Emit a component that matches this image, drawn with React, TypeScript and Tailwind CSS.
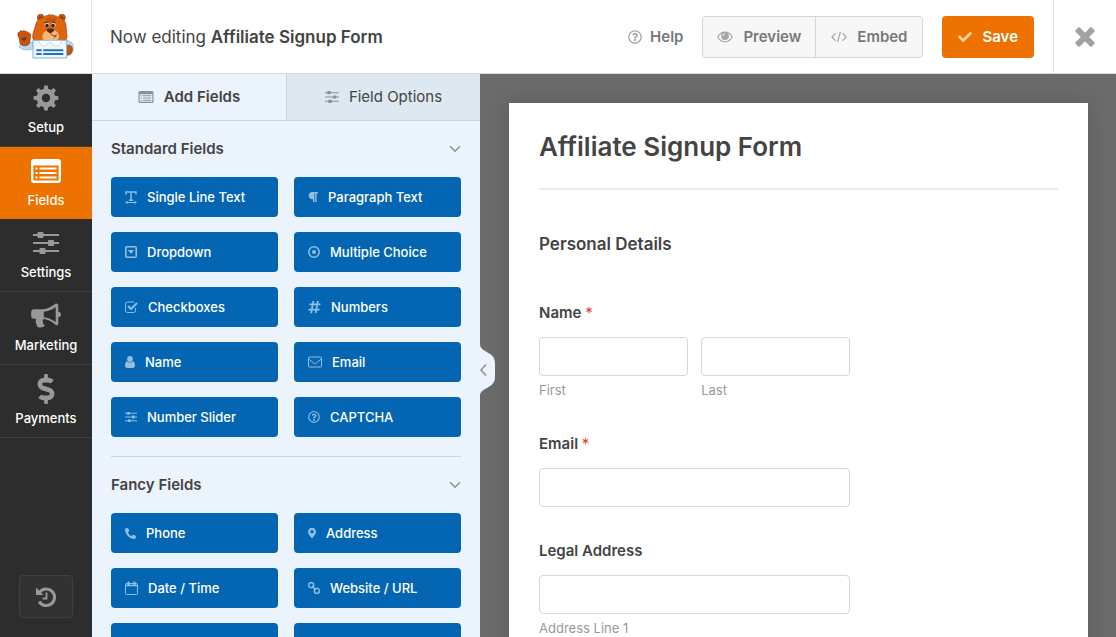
import type { ReactNode } from "react";
import {
  FaCheck,
  FaDollarSign,
  FaHashtag,
  FaLock,
  FaMapMarkerAlt,
  FaParagraph,
  FaPhoneAlt,
  FaRegQuestionCircle,
  FaUpload,
} from "react-icons/fa";

type IconProps = { className?: string };

function BearLogo() {
  return (
    <svg viewBox="50 40 174 141" className="h-[47px] w-[58px]" role="img" aria-label="WPForms">
      <path d="M70 132c-14 0-16 8-10 13 8 7 22 7 38 3v-22c-8 2-14 7-28 6z" fill="#b9dcf0" stroke="#7aa8c8" strokeWidth="2" />
      <path d="M196 122c18 2 26 12 22 28-3 12-10 16-20 16z" fill="#b9dcf0" stroke="#7aa8c8" strokeWidth="2" />
      <path d="M200 138c10-4 16 2 16 12s-6 18-16 16z" fill="#c9540c" stroke="#7a3a12" strokeWidth="2" />
      <path
        d="M55 112c-4-7-3-15 3-14 0-6 6-6 8-3 3-3 8-2 9 1 4-2 8 0 8 4 6-1 9 3 8 8-2 7-1 15-4 24-6 8-20 8-27 1-3-8-1-14-5-21z"
        fill="#c9540c"
        stroke="#7a3a12"
        strokeWidth="2"
      />
      <path d="M63 113l6 2 7-3 3 5-7 8-7-5z" fill="#7a3418" />
      <circle cx="121" cy="54" r="10" fill="#d25a0c" stroke="#7a3a12" strokeWidth="2" />
      <circle cx="185" cy="54" r="10" fill="#d25a0c" stroke="#7a3a12" strokeWidth="2" />
      <circle cx="121" cy="55" r="5" fill="#8a3c12" />
      <circle cx="185" cy="55" r="5" fill="#8a3c12" />
      <path
        d="M106 76c2-14 14-22 27-24 1-4 5-5 8-3 2-5 8-5 11-2 3-3 8-2 10 2 4-2 8 0 8 3 14 2 25 10 27 24 0 12 3 22 3 36 0 8-6 14-14 14h-74c-9 0-15-6-15-14 0-14 6-22 9-36z"
        fill="#e0640c"
        stroke="#8a4414"
        strokeWidth="2"
      />
      <path d="M135 53l8 6 5-9 6 8 8-7 2 8 8-4-10 12h-20z" fill="#c4510b" />
      <path d="M126 110c2-14 14-20 25-20 11 0 24 6 25 18 1 12-8 17-25 17s-26-4-25-15z" fill="#f6b878" />
      <circle cx="140" cy="77" r="7" fill="#f4e6da" />
      <circle cx="159" cy="77" r="7" fill="#f4e6da" />
      <circle cx="140" cy="78" r="5.500" fill="#252b36" />
      <circle cx="158" cy="78" r="5.500" fill="#252b36" />
      <path d="M132 69l11-2M155 67l11 2" stroke="#6a2c0c" strokeWidth="3" />
      <path d="M139 90c0-5 22-5 22 0s-6 10-11 10-11-5-11-10z" fill="#5d2414" />
      <path d="M150 100c2 8 14 12 20 4M160 113l8-3" fill="none" stroke="#8a3c1a" strokeWidth="3" />
      <path d="M98 122h101v53H98z" fill="#eef6fc" stroke="#86b2d3" strokeWidth="3" />
      <path d="M116 123c2 12 10 18 19 15l14-11 14 11c10 3 18-3 20-15z" fill="#fff" stroke="#a5c9e2" strokeWidth="2" />
      <path d="M108 152h16M108 163h16M129 152h60M129 163h60" stroke="#2272b8" strokeWidth="6" />
    </svg>
  );
}

function GearIcon({ className }: IconProps) {
  return (
    <svg viewBox="0 0 26 26" fill="currentColor" className={className} aria-hidden="true">
      <path
        fillRule="evenodd"
        d="M13 3.600a9.400 9.400 0 1 0 0 18.800 9.400 9.400 0 0 0 0-18.800zm0 5.200a4.200 4.200 0 1 1 0 8.400 4.200 4.200 0 0 1 0-8.400z"
      />
      {[0, 45, 90, 135, 180, 225, 270, 315].map((angle) => (
        <path key={angle} d="M10.600 5l.7-4.400h3.400l.7 4.400z" transform={`rotate(${angle} 13 13)`} />
      ))}
    </svg>
  );
}

function ListIcon({ className }: IconProps) {
  return (
    <svg viewBox="0 0 30 24" fill="currentColor" className={className} aria-hidden="true">
      <path
        fillRule="evenodd"
        d="M3 0h24a3 3 0 0 1 3 3v18a3 3 0 0 1-3 3H3a3 3 0 0 1-3-3V3a3 3 0 0 1 3-3zM2.400 6.500v14.100c0 .6.4 1 1 1h23.200c.6 0 1-.4 1-1V6.500z"
      />
      <path d="M4.500 8.500h2v2h-2zM8.500 8.500h17v2h-17zM4.500 13h2v2h-2zM8.500 13h17v2h-17zM4.500 17.500h2v2h-2zM8.500 17.500h17v2h-17z" />
    </svg>
  );
}

function SlidersIcon({ className }: IconProps) {
  return (
    <svg viewBox="0 0 26 24" fill="currentColor" className={className} aria-hidden="true">
      <path d="M0 3h26v2H0zM0 11h26v2H0zM0 19h26v2H0z" />
      <rect x="4.500" y="1" width="6" height="6" rx="1" />
      <rect x="15" y="9" width="6" height="6" rx="1" />
      <rect x="6.500" y="17" width="6" height="6" rx="1" />
    </svg>
  );
}

function BullhornIcon({ className }: IconProps) {
  return (
    <svg viewBox="0 0 30 26" fill="currentColor" className={className} aria-hidden="true">
      <path
        fillRule="evenodd"
        d="M25.500.5c1 0 1.800.8 1.800 1.800v6.500a2.600 2.600 0 0 1 0 5.200v6.500c0 1.600-1.600 2.200-2.800 1.200-4-3.400-7.500-5.200-11.500-5.800-1.600.6-1.800 2-.8 3-.9 1.300.3 2.300 1.600 3.400-.8 2.400-5.800 3-7.700 1.200-.7-2.600-2-4.800-1-7.700H3a2.800 2.800 0 0 1-2.800-2.800v-4A2.800 2.800 0 0 1 3 6.300h7.600C15.800 6.300 20 3.800 24.400.7c.3-.1.700-.2 1.100-.2zm-.8 3.400C20.800 6.700 16.900 8.300 12.800 8.700v5.500c4.100.4 8 2 11.900 4.900z"
      />
    </svg>
  );
}

function HistoryIcon({ className }: IconProps) {
  return (
    <svg viewBox="0 0 22 22" fill="none" stroke="currentColor" className={className} aria-hidden="true">
      <path d="M4.700 6.200a8.300 8.300 0 1 1-.5 9.400" strokeWidth="3" />
      <path d="M1 1.500V9h7.500z" fill="currentColor" stroke="none" />
      <path d="M11.500 6.500v6H7.500" strokeWidth="1.800" />
    </svg>
  );
}

function EyeIcon({ className }: IconProps) {
  return (
    <svg viewBox="0 0 16 12" fill="none" stroke="currentColor" className={className} aria-hidden="true">
      <path d="M.7 6C4.300-.5 11.700-.5 15.300 6 11.700 12.300 4.300 12.300.7 6z" strokeWidth="1.200" />
      <circle cx="8" cy="5.200" r="3.800" fill="currentColor" stroke="none" />
      <path d="M5.800 5.200A2.200 2.200 0 0 1 8 3" stroke="#f7f7f7" strokeWidth=".8" />
    </svg>
  );
}

function CodeIcon({ className }: IconProps) {
  return (
    <svg viewBox="0 0 16 12" fill="none" stroke="currentColor" strokeWidth="1.200" className={className} aria-hidden="true">
      <path d="M4.500 2.200L.9 6l3.600 3.800M11.500 2.200L15.100 6l-3.600 3.800M9.400.8L6.600 11.200" />
    </svg>
  );
}

function CloseIcon({ className }: IconProps) {
  return (
    <svg viewBox="0 0 20 20" fill="currentColor" className={className} aria-hidden="true">
      <rect x="-1.500" y="7" width="23" height="6" rx="1.200" transform="rotate(45 10 10)" />
      <rect x="-1.500" y="7" width="23" height="6" rx="1.200" transform="rotate(-45 10 10)" />
    </svg>
  );
}

function ChevronIcon({ className }: IconProps) {
  return (
    <svg viewBox="0 0 12 8" fill="none" stroke="currentColor" strokeWidth="1.500" className={className} aria-hidden="true">
      <path d="M1 1.200l5 5 5-5" />
    </svg>
  );
}

function TextIcon() {
  return (
    <svg viewBox="0 0 12 13" className="h-[13px] w-3" fill="none" stroke="currentColor" aria-hidden="true">
      <path d="M1 3.500V1h10v2.500M6 1v8.500M4 9.200h4" strokeWidth="1.400" />
      <path d="M1.500 11.500h9" />
      <path d="M2.500 9.800v3.200L0 11.500zM9.500 9.800v3.200l2.500-1.500z" fill="currentColor" stroke="none" />
    </svg>
  );
}

function DropdownIcon() {
  return (
    <svg viewBox="0 0 12 12" className="size-3" fill="none" stroke="currentColor" aria-hidden="true">
      <rect x=".8" y=".8" width="10.400" height="10.400" rx="1" strokeWidth="1.600" />
      <path d="M3 4h6L6 8z" fill="currentColor" stroke="none" />
    </svg>
  );
}

function RadioIcon() {
  return (
    <svg viewBox="0 0 12 12" className="size-3" fill="none" stroke="currentColor" aria-hidden="true">
      <circle cx="6" cy="6" r="5.200" strokeWidth="1.500" />
      <circle cx="6" cy="6" r="2" fill="currentColor" stroke="none" />
    </svg>
  );
}

function CheckboxIcon() {
  return (
    <svg viewBox="0 0 13 12" className="h-3 w-[13px]" fill="none" stroke="currentColor" aria-hidden="true">
      <path d="M10.500 7v2.500a2 2 0 0 1-2 2h-6a2 2 0 0 1-2-2V3a2 2 0 0 1 2-2h6.500" />
      <path d="M3 5l3 3 6-6" strokeWidth="2" />
    </svg>
  );
}

function UserIcon() {
  return (
    <svg viewBox="0 0 10 12" className="h-3 w-2.5" fill="currentColor" aria-hidden="true">
      <circle cx="5" cy="3" r="2.900" />
      <path d="M2.200 5.200C.6 5.600 0 7.500 0 9.500 0 11 .9 12 2.200 12h5.600C9.100 12 10 11 10 9.500c0-2-.6-3.900-2.200-4.300a4 4 0 0 1-5.600 0z" />
    </svg>
  );
}

function EnvelopeIcon() {
  return (
    <svg viewBox="0 0 14 12" className="h-3 w-3.5" fill="none" stroke="currentColor" aria-hidden="true">
      <rect x=".5" y="1" width="13" height="10" rx="1" />
      <path d="M.8 3l5 4.200c.8.600 1.600.6 2.400 0l5-4.200" />
    </svg>
  );
}

function CalendarIcon() {
  return (
    <svg viewBox="0 0 13 14" className="h-3.5 w-[13px]" fill="none" stroke="currentColor" aria-hidden="true">
      <rect x=".5" y="2.500" width="12" height="11" rx="1" />
      <path d="M.5 4.500h12" strokeWidth="1.500" />
      <path d="M3.500.5v3.500M9.500.5v3.500" strokeWidth="2" />
    </svg>
  );
}

function ChainIcon() {
  return (
    <svg viewBox="0 0 12 12" className="size-3" fill="none" stroke="currentColor" strokeWidth="1.400" aria-hidden="true">
      <rect x=".8" y=".8" width="4.800" height="4.800" rx="1.800" />
      <rect x="6.400" y="6.400" width="4.800" height="4.800" rx="1.800" />
      <path d="M4 4l4 4" />
    </svg>
  );
}

type Field = { label: string; icon: ReactNode };

const standardFields: Field[] = [
  { label: "Single Line Text", icon: <TextIcon /> },
  { label: "Paragraph Text", icon: <FaParagraph className="h-3 w-2.5" /> },
  { label: "Dropdown", icon: <DropdownIcon /> },
  { label: "Multiple Choice", icon: <RadioIcon /> },
  { label: "Checkboxes", icon: <CheckboxIcon /> },
  { label: "Numbers", icon: <FaHashtag className="h-3.5 w-[13px]" /> },
  { label: "Name", icon: <UserIcon /> },
  { label: "Email", icon: <EnvelopeIcon /> },
  { label: "Number Slider", icon: <SlidersIcon className="h-3 w-3" /> },
  { label: "CAPTCHA", icon: <FaRegQuestionCircle className="size-3" /> },
];

const fancyFields: Field[] = [
  { label: "Phone", icon: <FaPhoneAlt className="size-[11px]" /> },
  { label: "Address", icon: <FaMapMarkerAlt className="h-3 w-2" /> },
  { label: "Date / Time", icon: <CalendarIcon /> },
  { label: "Website / URL", icon: <ChainIcon /> },
  { label: "File Upload", icon: <FaUpload className="size-3" /> },
  { label: "Password", icon: <FaLock className="size-3" /> },
];

const navItems = [
  { label: "Setup", icon: <GearIcon className="size-[26px]" /> },
  { label: "Fields", icon: <ListIcon className="h-6 w-[30px]" />, active: true },
  { label: "Settings", icon: <SlidersIcon className="h-6 w-[26px]" /> },
  { label: "Marketing", icon: <BullhornIcon className="h-[26px] w-[30px]" /> },
  { label: "Payments", icon: <FaDollarSign className="h-[30px] w-[18px]" /> },
];

function FieldGroup({ title, fields }: { title: string; fields: Field[] }) {
  return (
    <section className="border-b border-[#ccd6e2] pb-[19px]">
      <h2>
        <button type="button" className="flex h-14 w-full items-center justify-between text-[15px] font-semibold text-[#444]">
          {title}
          <ChevronIcon className="h-2 w-3 text-[#86919e]" />
        </button>
      </h2>
      <div className="grid grid-cols-2 gap-x-4 gap-y-[15px]">
        {fields.map((field) => (
          <button
            key={field.label}
            type="button"
            className="flex h-10 items-center gap-2.5 rounded bg-[#0466b3] px-3.5 text-[13px]/5 font-medium text-white"
          >
            <span className="text-[#8fbfe3]">{field.icon}</span>
            {field.label}
          </button>
        ))}
      </div>
    </section>
  );
}

const inputClass = "h-[39px] w-full rounded border border-[#d6d6d6] bg-white px-3 text-[15px] text-[#444]";
const labelClass = "mb-3 block text-[15px]/6 font-semibold text-[#444]";
const sublabelClass = "mt-1 block text-[13px]/5 text-[#999]";

function Header() {
  return (
    <header className="flex h-[74px] shrink-0 items-stretch border-b border-[#d5dbe1] bg-white">
      <div className="flex w-[92px] shrink-0 items-center justify-center border-r border-[#e4e4e4]">
        <BearLogo />
      </div>
      <p className="flex flex-1 items-center pl-[18px] text-[17px]/6 whitespace-pre text-[#444]">
        Now editing <strong className="font-semibold">Affiliate Signup Form</strong>
      </p>
      <div className="flex items-center gap-[19px] pr-[19px] text-[15px]/6 font-semibold text-[#777]">
        <a href="#help" className="flex items-center gap-2">
          <FaRegQuestionCircle className="size-3.5 text-[#a5a5a5]" />
          Help
        </a>
        <div className="flex h-[42px] rounded border border-[#d6d6d6] bg-[#f7f7f7]">
          <button type="button" className="flex items-center gap-2.5 border-r border-[#d6d6d6] px-3.5">
            <EyeIcon className="h-3 w-4 text-[#a5a5a5]" />
            Preview
          </button>
          <button type="button" className="flex items-center gap-2.5 px-[15px]">
            <CodeIcon className="h-3 w-4 text-[#a5a5a5]" />
            Embed
          </button>
        </div>
        <button type="button" className="flex h-[42px] items-center gap-2.5 rounded bg-[#ee7200] px-4 text-white">
          <FaCheck className="size-3.5 text-[#ffd0a0]" />
          Save
        </button>
      </div>
      <button
        type="button"
        aria-label="Close"
        className="flex w-[63px] shrink-0 items-center justify-center border-l border-[#e0e0e0] text-[#a0a3a3]"
      >
        <CloseIcon className="size-5" />
      </button>
    </header>
  );
}

function Sidebar() {
  return (
    <nav className="flex w-[92px] shrink-0 flex-col items-center bg-[#2d2d2d]">
      {navItems.map((item) => (
        <a
          key={item.label}
          href={`#${item.label.toLowerCase()}`}
          className={
            item.active
              ? "flex h-18 w-full flex-col items-center bg-[#ee7200] pt-[9px] text-white"
              : "flex h-[73px] w-full flex-col items-center border-b border-[#404040] pt-[9px] text-[#999]"
          }
        >
          <span className="flex h-[30px] items-center">{item.icon}</span>
          <span className="mt-1 text-[13px]/5 font-medium text-white">{item.label}</span>
        </a>
      ))}
      <button
        type="button"
        aria-label="Revisions"
        className="mt-auto mb-[19px] flex h-[43px] w-[54px] items-center justify-center rounded border border-[#404040] bg-[#323232] text-[#999]"
      >
        <HistoryIcon className="size-[22px]" />
      </button>
    </nav>
  );
}

function FieldsPanel() {
  return (
    <aside className="relative w-[388px] shrink-0 bg-[#ebf3fc]">
      <div className="flex h-full flex-col overflow-hidden">
        <div role="tablist" className="grid h-[47px] shrink-0 grid-cols-2 border-b border-[#ccd6e2] text-[15px]/6 text-[#444]">
          <button type="button" role="tab" aria-selected="true" className="flex items-center justify-center gap-2.5 font-semibold">
            <ListIcon className="h-3 w-4 text-[#86919e]" />
            Add Fields
          </button>
          <button
            type="button"
            role="tab"
            aria-selected="false"
            className="flex items-center justify-center gap-2.5 border-l border-[#ccd6e2] bg-[#dee8f0]"
          >
            <SlidersIcon className="h-3.5 w-3.5 text-[#86919e]" />
            Field Options
          </button>
        </div>
        <div className="px-[19px]">
          <FieldGroup title="Standard Fields" fields={standardFields} />
          <FieldGroup title="Fancy Fields" fields={fancyFields} />
        </div>
      </div>
      <button type="button" aria-label="Collapse panel" className="absolute top-[270px] left-full h-[52px] w-[15px]">
        <svg viewBox="0 0 15 52" className="h-[52px] w-[15px]" aria-hidden="true">
          <path d="M0 0c0 9 15 7 15 19v14c0 12-15 10-15 19z" fill="#ebf3fc" />
          <path d="M6 20.500L1 26l5 5.500" fill="none" stroke="#86919e" strokeWidth="1.500" />
        </svg>
      </button>
    </aside>
  );
}

function FormPreview() {
  return (
    <main className="min-w-0 flex-1 overflow-hidden bg-[#6b6b6b] pt-[29px] pr-7 pl-[29px]">
      <form className="min-h-full bg-white px-[30px] pb-10 shadow-[0_0_20px_rgba(0,0,0,0.15)]">
        <h1 className="border-b-2 border-[#ededed] pt-[26px] pb-6 text-[26px]/[35px] font-semibold text-[#444]">
          Affiliate Signup Form
        </h1>
        <h2 className="pt-[42px] text-[17px]/6 font-semibold text-[#444]">Personal Details</h2>

        <div className="mt-[45px] flex flex-col gap-8">
          <fieldset className="w-3/5">
            <legend className={labelClass}>
              Name <span className="font-normal text-[#e03c31]">*</span>
            </legend>
            <div className="grid grid-cols-2 gap-[13px]">
              <div>
                <input id="first" type="text" className={inputClass} />
                <label htmlFor="first" className={sublabelClass}>First</label>
              </div>
              <div>
                <input id="last" type="text" className={inputClass} />
                <label htmlFor="last" className={sublabelClass}>Last</label>
              </div>
            </div>
          </fieldset>

          <div className="w-3/5">
            <label htmlFor="email" className={labelClass}>
              Email <span className="font-normal text-[#e03c31]">*</span>
            </label>
            <input id="email" type="email" className={inputClass} />
          </div>

          <fieldset className="w-3/5">
            <legend className={labelClass}>Legal Address</legend>
            <input id="address-1" type="text" className={inputClass} />
            <label htmlFor="address-1" className={sublabelClass}>Address Line 1</label>
          </fieldset>
        </div>
      </form>
    </main>
  );
}

export default function App() {
  return (
    <div className="flex h-screen flex-col overflow-hidden font-['Inter','Liberation_Sans',sans-serif]">
      <Header />
      <div className="flex min-h-0 flex-1">
        <Sidebar />
        <FieldsPanel />
        <FormPreview />
      </div>
    </div>
  );
}
